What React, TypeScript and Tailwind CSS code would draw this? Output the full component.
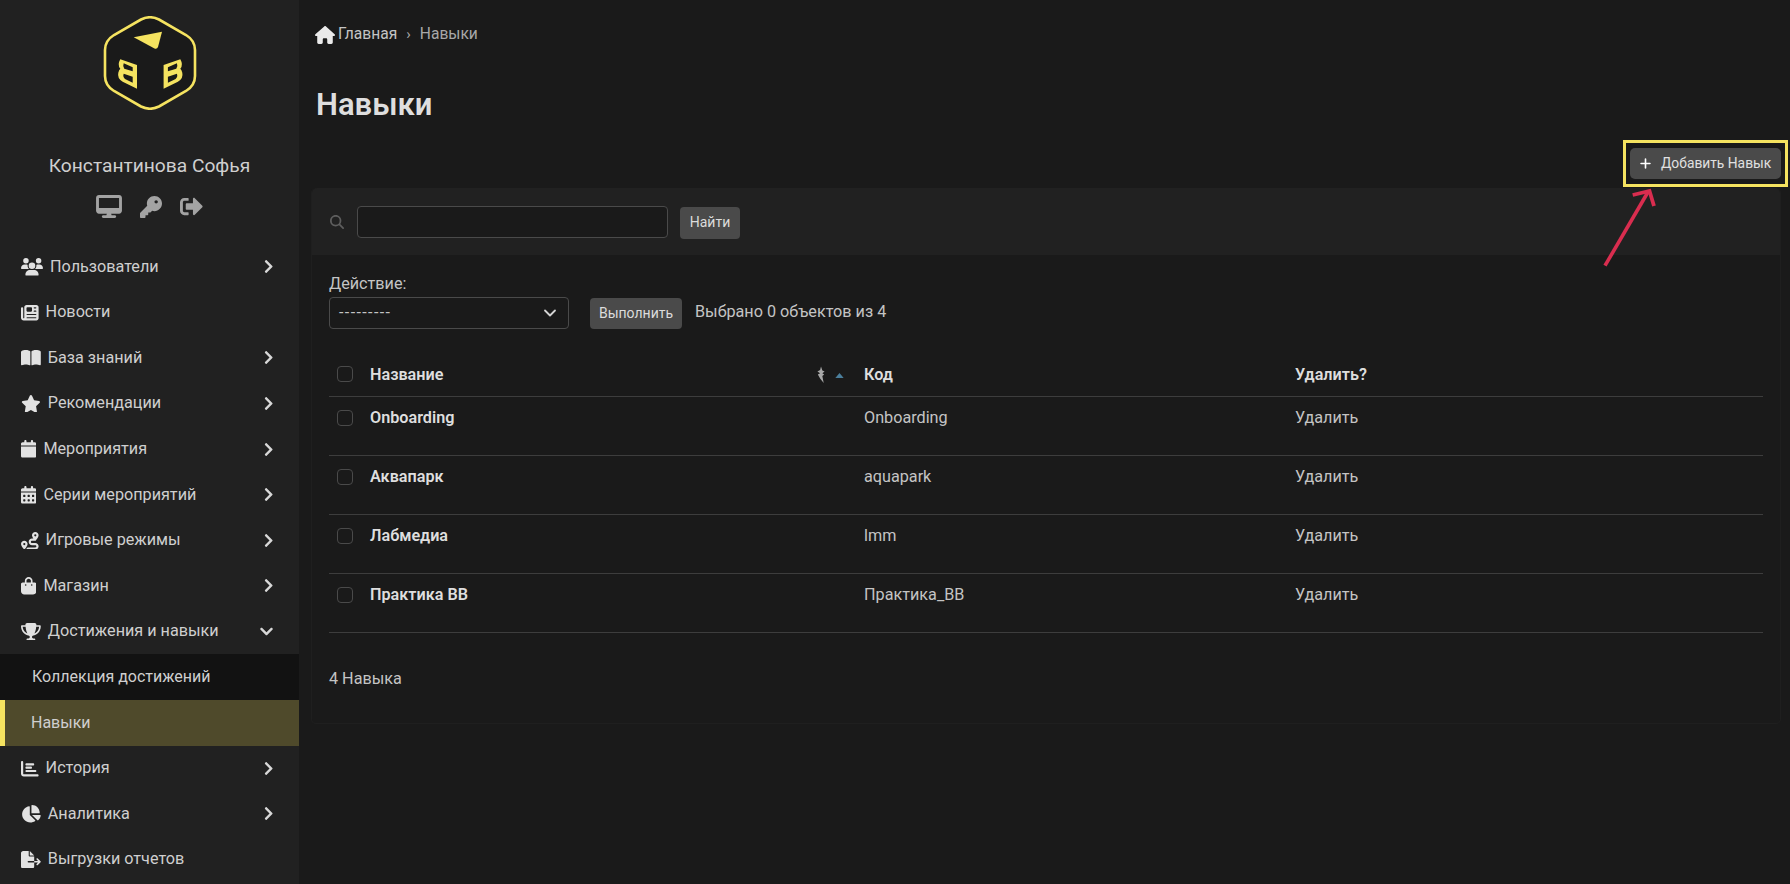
import React from "react";
import {
  FaUsers, FaNewspaper, FaBookOpen, FaStar, FaCalendar, FaCalendarDays, FaRoute, FaBagShopping, FaTrophy,
  FaChartBar, FaChartPie, FaFileExport, FaDesktop, FaKey, FaHouse, FaMagnifyingGlass, FaPlus,
} from "react-icons/fa6";
import { FaSignOutAlt, FaChevronRight, FaChevronDown } from "react-icons/fa";
import { ChevronDown } from "lucide-react";

type Ico = React.ComponentType<{ className?: string }>;
const nav: [Ico, string, string, boolean][] = [
  [FaUsers, "w-[22px]", "Пользователи", true],
  [FaNewspaper, "w-[17.6px]", "Новости", false],
  [FaBookOpen, "w-[19.8px]", "База знаний", true],
  [FaStar, "w-[19.8px]", "Рекомендации", true],
  [FaCalendar, "w-[15.4px]", "Мероприятия", true],
  [FaCalendarDays, "w-[15.4px]", "Серии мероприятий", true],
  [FaRoute, "w-[17.6px]", "Игровые режимы", true],
  [FaBagShopping, "w-[15.4px]", "Магазин", true],
];
const nav2: [Ico, string, string, boolean][] = [
  [FaChartBar, "w-[17.6px]", "История", true],
  [FaChartPie, "w-[19.8px]", "Аналитика", true],
  [FaFileExport, "w-[19.8px]", "Выгрузки отчетов", false],
];

function NavRow({ Icon, w, label, arrow }: { Icon: Ico; w: string; label: string; arrow: boolean }) {
  return (
    <div className="h-[45.6px] flex items-center pl-[21px] pr-[26px] text-[16.2px] text-[#cfcfcf]">
      <Icon className={`${w} h-[17.6px] mr-[7px] text-[#e2e2e2] shrink-0`} />
      <span>{label}</span>
      {arrow && <FaChevronRight className="w-[9.4px] h-[15px] ml-auto text-[#d8d8d8]" />}
    </div>
  );
}

const rows = [
  ["Onboarding", "Onboarding"],
  ["Аквапарк", "aquapark"],
  ["Лабмедиа", "lmm"],
  ["Практика ВВ", "Практика_ВВ"],
];

function Check() {
  return <span className="block w-[16px] h-[16px] rounded-[4px] border border-[#4a4a4a] bg-[#1a1a1a]" />;
}

function LogoB() {
  return (
    <path
      fillRule="evenodd"
      d="M17.3 43.3 L34 49 L34 72.7 L19.7 65.7 Q14 62.3 15.3 56.7 Q16 53.5 17.3 52.7 Q14 49 17.3 43.3 Z M20.7 47.3 L29.7 51.3 L29.7 55.3 L21.3 52.7 Q19.5 50 20.7 47.3 Z M20.7 57.7 L29.7 60.7 L29.7 66.7 L22 63 Q19.5 60.5 20.7 57.7 Z"
      fill="#f5e360"
    />
  );
}

export default function App() {
  return (
    <div className="relative flex w-full h-[884px] overflow-hidden bg-[#1a1a1a] text-[#d4d4d4] font-['Roboto',sans-serif]">
      <aside className="w-[299px] shrink-0 bg-[#212121] flex flex-col">
        <div className="pt-[16px] flex justify-center">
          <svg width="94" height="94" viewBox="0 0 94 94" className="block">
            <path d="M38 3.5 Q47 -1 56 3.5 L83 19 Q92 24.5 92 34 L92 60 Q92 69.5 83 75 L56 90.5 Q47 95 38 90.5 L11 75 Q2 69.5 2 60 L2 34 Q2 24.5 11 19 Z" fill="#1a1a1a" stroke="#f5e360" strokeWidth="2.6" />
            <path d="M30.7 21.3 L59 15.7 L55 31 Q54 33.5 51.5 32.5 Z" fill="#f5e360" />
            <LogoB />
            <g transform="translate(94.6,0) scale(-1,1)"><LogoB /></g>
          </svg>
        </div>
        <div className="mt-[44px] text-center text-[19.2px] leading-[24px] text-[#cfcfcf]">Константинова Софья</div>
        <div className="mt-[17px] flex justify-center items-center gap-[18px] text-[#a3a3a3]">
          <FaDesktop className="w-[26px] h-[23px]" />
          <FaKey className="w-[22px] h-[22px]" />
          <FaSignOutAlt className="w-[23px] h-[23px]" />
        </div>
        <nav className="mt-[26px]">
          {nav.map(([I, w, l, a]) => <NavRow key={l} Icon={I} w={w} label={l} arrow={a} />)}
          <div className="h-[45.6px] flex items-center pl-[21px] pr-[26px] text-[16.2px] text-[#cfcfcf]">
            <FaTrophy className="w-[19.8px] h-[17.6px] mr-[7px] text-[#e2e2e2]" />
            <span>Достижения и навыки</span>
            <FaChevronDown className="w-[13px] h-[15px] ml-auto text-[#d8d8d8]" />
          </div>
          <div className="h-[45.6px] bg-[#121212] flex items-center pl-[32px] text-[16px] text-[#cfcfcf]">Коллекция достижений</div>
          <div className="h-[45.6px] bg-[#4f4a2b] border-l-[5px] border-[#f5e360] flex items-center pl-[26px] text-[16px] text-[#cfcfcf]">Навыки</div>
          {nav2.map(([I, w, l, a]) => <NavRow key={l} Icon={I} w={w} label={l} arrow={a} />)}
        </nav>
      </aside>

      <main className="flex-1 min-w-0 pl-[12px] pr-[9px] flex flex-col">
        <div className="mt-[25px] pl-[4px] h-[19px] flex items-center text-[15.6px] text-[#a8a8a8]">
          <FaHouse className="w-[20px] h-[18px] text-[#eaeaea] mr-[3px]" />
          <span className="text-[#c4c4c4]">Главная</span>
          <span className="mx-[9px] text-[15px]">›</span>
          <span>Навыки</span>
        </div>
        <h1 className="mt-[41px] pl-[5px] text-[31px] leading-[40px] font-semibold text-[#dedede]">Навыки</h1>
        <div className="mt-[23px] flex justify-end h-[31px]">
          <button className="w-[151px] h-[31px] rounded-[5px] bg-[#4a4a4a] flex items-center pl-[9px] text-[13.8px] text-[#e0e0e0]">
            <FaPlus className="w-[13px] h-[13px] text-white mr-[9px]" />
            Добавить Навык
          </button>
        </div>
        <section className="mt-[9px] h-[536px] rounded-[5px] border border-[#1f1f1f] border-t-0 flex flex-col">
          <div className="h-[67px] bg-[#212121] rounded-t-[5px] flex items-center pl-[18px]">
            <FaMagnifyingGlass className="w-[14px] h-[14px] text-[#5e5e5e]" />
            <input className="ml-[13px] w-[311px] h-[32px] rounded-[4px] border border-[#4a4a4a] bg-[#1a1a1a]" />
            <button className="ml-[12px] mt-[2px] w-[60px] h-[32px] rounded-[4px] bg-[#4a4a4a] text-[14px] text-[#dcdcdc]">Найти</button>
          </div>
          <div className="px-[17px] flex-1">
            <div className="mt-[19px] text-[16.2px] leading-[20px] text-[#c4c4c4]">Действие:</div>
            <div className="mt-[2px] flex items-center">
              <div className="w-[240px] h-[32px] rounded-[4px] border border-[#4a4a4a] flex items-center pl-[9px] pr-[8px] text-[16px] tracking-[1.4px] text-[#c4c4c4]">
                ---------
                <ChevronDown className="w-[20px] h-[20px] ml-auto text-[#d4d4d4]" strokeWidth={2.2} />
              </div>
              <button className="ml-[21px] mt-[2px] w-[92px] h-[31px] rounded-[4px] bg-[#4a4a4a] text-[14px] text-[#dcdcdc]">Выполнить</button>
              <span className="ml-[13px] text-[16.2px] text-[#c4c4c4]">Выбрано 0 объектов из 4</span>
            </div>
            <table className="mt-[24px] w-[1434px] table-fixed border-collapse text-[16.2px]">
              <colgroup>
                <col className="w-[41px]" />
                <col className="w-[494px]" />
                <col className="w-[431px]" />
                <col />
              </colgroup>
              <thead>
                <tr className="h-[43px] border-b border-[#3d3d3d]">
                  <th className="pl-[8px]"><Check /></th>
                  <th className="pt-[2px] text-left font-semibold text-[#dedede]">
                    <div className="flex items-center pr-[20px]">
                      Название
                      <svg viewBox="0 0 10 20" className="ml-auto w-[10px] h-[18px]">
                        <path d="M5 0.5 L6.5 5 L9 6 L6.5 8 L8.5 9.5 L6.5 11 L8 19 L4 14 L1.5 9.5 L4 8 L1 6 L4 4.5 Z" fill="#a8a8a8" />
                      </svg>
                      <svg viewBox="0 0 10 6" className="ml-[9px] w-[9px] h-[5px]"><path d="M5 0 L10 6 L0 6 Z" fill="#4b7f9c" /></svg>
                    </div>
                  </th>
                  <th className="pt-[2px] text-left font-semibold text-[#dedede]">Код</th>
                  <th className="pt-[2px] text-left font-semibold text-[#dedede]">Удалить?</th>
                </tr>
              </thead>
              <tbody>
                {rows.map(([n, c]) => (
                  <tr key={n} className="h-[59px] border-b border-[#3d3d3d] align-top">
                    <td className="pl-[8px] pt-[13px]"><Check /></td>
                    <td className="pt-[9px] font-semibold text-[#dedede]">{n}</td>
                    <td className="pt-[9px] text-[#c4c4c4]">{c}</td>
                    <td className="pt-[9px] text-[#c4c4c4]">Удалить</td>
                  </tr>
                ))}
              </tbody>
            </table>
            <div className="mt-[34px] text-[16.2px] text-[#c4c4c4]">4 Навыка</div>
          </div>
        </section>
      </main>

      <div className="absolute left-[1623px] top-[140px] w-[165px] h-[47px] border-[3px] border-[#f5e360] pointer-events-none" />
      <svg className="absolute left-[1595px] top-[186px] pointer-events-none" width="70" height="85" viewBox="0 0 70 85" fill="none">
        <path d="M10 79.7 L53 6" stroke="#d92d4f" strokeWidth="3.6" />
        <path d="M37.7 9 L54.5 5 L59 20" stroke="#d92d4f" strokeWidth="3.8" />
      </svg>
    </div>
  );
}
